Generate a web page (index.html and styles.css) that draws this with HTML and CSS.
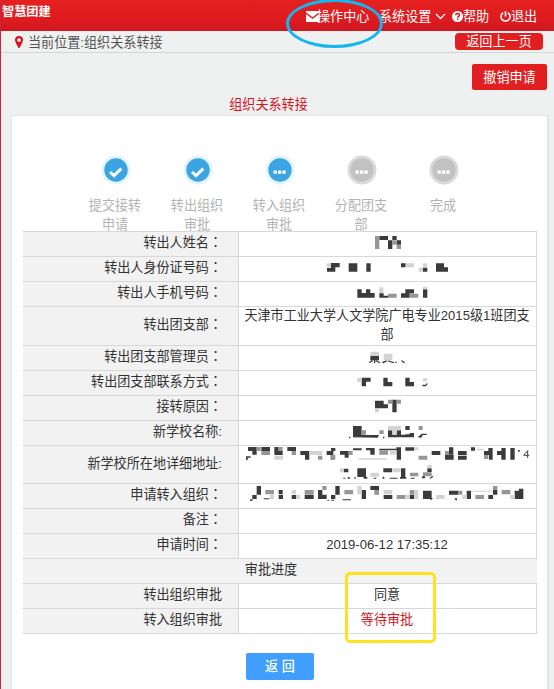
FILE: index.html
```html
<!DOCTYPE html>
<html lang="zh-CN">
<head>
<meta charset="utf-8">
<title>智慧团建</title>
<link rel="stylesheet" href="styles.css">
</head>
<body>
<div class="page">
  <header class="topbar">
    <div class="brand">智慧团建</div>
    <nav class="nav">
      <a class="nav-center"><svg width="13" height="11" viewBox="0 0 13 11"><path fill="#fff" d="M0 0h13v1.3L6.5 6.2 0 1.3zM0 3l6.5 5L13 3v8H0z"/></svg>操作中心</a>
      <a class="nav-settings">系统设置<svg class="chevron" width="11" height="7" viewBox="0 0 11 7"><path fill="none" stroke="#fff" stroke-width="1.3" d="M1 1l4.5 4.5L10 1"/></svg></a>
      <a class="nav-help"><svg width="11" height="11" viewBox="0 0 11 11"><circle cx="5.5" cy="5.5" r="5.5" fill="#fff"/><path d="M3.7 4.3c0-2.4 3.8-2.4 3.8-.1 0 1.3-1.8 1.2-1.8 2.5M5.7 7.6v1.5" fill="none" stroke="#d71920" stroke-width="1.5"/></svg>帮助</a>
      <a class="nav-exit"><svg width="11" height="11" viewBox="0 0 11 11"><path d="M3.2 1.7a4.5 4.5 0 1 0 4.6 0M5.5 0v5.4" fill="none" stroke="#fff" stroke-width="1.6"/></svg>退出</a>
    </nav>
  </header>
  <div class="crumbs">
    <svg class="pin" width="8" height="12" viewBox="0 0 8 12"><path fill="#d5141d" fill-rule="evenodd" d="M4 0a4 4 0 0 1 4 4C8 6 6.3 8.3 4.8 11.5Q4 12.5 3.2 11.5C1.700 8.300 0 6 0 4a4 4 0 0 1 4-4zm0 2.200a1.900 1.900 0 1 0 0 3.800 1.900 1.900 0 0 0 0-3.800z"/></svg>
    <span class="crumb-text">当前位置:组织关系转接</span>
    <a class="back-page">返回上一页</a>
  </div>
  <div class="actions"><a class="revoke">撤销申请</a></div>
  <h1 class="title">组织关系转接</h1>
  <main class="panel">
    <div class="steps">
      <div class="step"><svg class="dot" viewBox="0 0 30 30"><circle cx="15" cy="15" r="14.500" fill="#e2f5fe"/><circle cx="15" cy="15" r="11.700" fill="#3ba4e3"/><path d="M9 17l4 3.700 7.300-7" fill="none" stroke="#fff" stroke-width="3"/></svg><p>提交接转申请</p></div>
      <div class="step"><svg class="dot" viewBox="0 0 30 30"><circle cx="15" cy="15" r="14.500" fill="#e2f5fe"/><circle cx="15" cy="15" r="11.700" fill="#3ba4e3"/><path d="M9 17l4 3.700 7.300-7" fill="none" stroke="#fff" stroke-width="3"/></svg><p>转出组织审批</p></div>
      <div class="step"><svg class="dot" viewBox="0 0 30 30"><circle cx="15" cy="15" r="14.500" fill="#e2f5fe"/><circle cx="15" cy="15" r="11.700" fill="#3ba4e3"/><path d="M8.500 15.500h3.300v3.300H8.500zm4.500 0h3.300v3.300H13zm4.400 0h3.300v3.300h-3.300z" fill="#fff"/></svg><p>转入组织审批</p></div>
      <div class="step"><svg class="dot" viewBox="0 0 30 30"><circle cx="15" cy="15" r="14.500" fill="#d9dadb"/><circle cx="15" cy="15" r="11.700" fill="#c2c2c2"/><path d="M8.500 15.500h3.300v3.300H8.500zm4.500 0h3.300v3.300H13zm4.400 0h3.300v3.300h-3.300z" fill="#fff"/></svg><p>分配团支部</p></div>
      <div class="step"><svg class="dot" viewBox="0 0 30 30"><circle cx="15" cy="15" r="14.500" fill="#d9dadb"/><circle cx="15" cy="15" r="11.700" fill="#c2c2c2"/><path d="M8.500 15.500h3.300v3.300H8.500zm4.500 0h3.300v3.300H13zm4.400 0h3.300v3.300h-3.300z" fill="#fff"/></svg><p>完成</p></div>
    </div>
    <div class="table">
      <div class="label">转出人姓名<i lang="zh-TW">：</i></div>
      <div class="value"><svg class="mosaic" viewBox="27 15 894 72"><path class="m1" d="M448 27h26v12h-26zM474 40h13v26h-13zM487 27h13v12h-13zM500 40h13v13h-13z"/><path class="m2" d="M435 27h13v39h-13zM487 40h13v13h-13zM500 53h13v13h-13z"/></svg></div>
      <div class="label">转出人身份证号码<i lang="zh-TW">：</i></div>
      <div class="value"><svg class="mosaic" viewBox="27 87 894 75"><path class="m1" d="M303 105h26v13h-13v13h-25v-11h12zM356 106h26v25h-26zM409 106h13v25h-13zM513 106h14v12h-14zM618 106h24v12h12v13h-36zM579 119h13v12h-13z"/><path class="m3" d="M291 106h12v12h-12zM527 106h25v12h-25zM566 119h13v12h-13zM579 106h13v12h-13z"/></svg></div>
      <div class="label">转出人手机号码<i lang="zh-TW">：</i></div>
      <div class="value"><svg class="mosaic" viewBox="27 162 894 75"><path class="m1" d="M382 184h13v11h13v-11h13v11h13v14h-52zM448 196h13v7h13v6h-26zM513 196h13v-12h26v12h-13v13h-26zM579 184h13v25h-13z"/><path class="m2" d="M474 197h26v12h-26zM539 196h13v13h-13zM552 197h13v12h-13z"/><path class="m3" d="M448 178h12v17h-12zM579 176h13v8h-13z"/></svg></div>
      <div class="label tall">转出团支部<i lang="zh-TW">：</i></div>
      <div class="value tall">天津市工业大学人文学院广电专业2015级1班团支部</div>
      <div class="label">转出团支部管理员<i lang="zh-TW">：</i></div>
      <div class="value"><svg class="mosaic" viewBox="27 15 894 75"><path class="m1" d="M421 44h26v14h-26zM416 64l9-6 5 2-11 6zM432 58h4v8h-4zM439 58l12 6-2 3-12-6zM455 64l14-6 3 3-12 6zM474 58l19 6-3 3-17-6zM495 62h5v3h-5zM515 57l10 7-3 3-8-6z"/><path class="m3" d="M421 32h26v12h-26zM461 38h26v20h-26z"/></svg></div>
      <div class="label">转出团支部联系方式<i lang="zh-TW">：</i></div>
      <div class="value"><svg class="mosaic" viewBox="27 90 894 75"><path class="m1" d="M395 110h27v12h-14v14h-13zM460 110h13v13h14v13h-27zM526 110h13v13h13v13h-26zM577 131h10l4-6 2 5-6 6h-10z"/><path class="m3" d="M382 110h13v13h-13zM579 112h12v9h-12z"/></svg></div>
      <div class="label">接转原因<i lang="zh-TW">：</i></div>
      <div class="value"><svg class="mosaic" viewBox="27 165 894 75"><path class="m1" d="M435 179h26v11h13v12h-39zM487 176h13v38h-13z"/><path class="m2" d="M474 176h13v12h-13zM500 176h13v12h-13z"/><path class="m3" d="M435 204h12v10h-12z"/></svg></div>
      <div class="label">新学校名称:</div>
      <div class="value"><svg class="mosaic" viewBox="27 240 894 78"><path class="m1" d="M369 255h26v27h52l-4 8-74-1zM357 287h4v5h-4zM459 287h4v5h-4zM474 268h13v13h13v-13h13v13h14v8h-53zM526 255h13v12h-13zM526 280h13v-4h13v13h-26zM563 289l12-11h15v4h-12l-4 8z"/><path class="m2" d="M395 268h13v13h-13zM448 268h13v11h-13zM566 255h12v12h-12z"/><path class="m3" d="M474 255h39v13h-39zM487 268h13v13h-13z"/></svg></div>
      <div class="label address">新学校所在地详细地址:</div>
      <div class="value address"><svg class="mosaic" viewBox="27 33 894 114"><path class="m1" d="M54 36h26v23H67V48H54zM94 36h26v12H94zM133 36h13v12h12v12h-25zM172 36h26v12h-26zM211 48h27v26h-13V60h-14zM290 48h13v-9h13v9h-6v26h-8V60h-12zM330 48h26v20h-12v-9h-14zM369 40h26v6h-26zM408 39h26v20h-13V46h-13zM448 41h51v-4h14v37h-13V46h-52zM526 37h26v10h-26zM605 48h26v12h-26zM657 37h13v22h-13zM645 60h26v14h-26zM684 48h26v12h-26zM684 62h26v12h-26zM723 37h12v10h-12zM762 48h13v-9h13v35h-11V60h-15zM801 48h13v-9h13v35h-13V60h-13zM841 39h13v35h-13zM864 45h5v5h-5zM48 64h14v4h-9v7h-5zM342 101h13v11h-13zM382 100h26v26h-26zM460 100h26v12h-26zM513 100h13v26h-13zM592 100h13v11h-13zM340 128h6v3h-6zM353 127h7v4h-7zM373 126h4v5h-4zM401 126h11v5h-11zM431 128h8v3h-8zM458 125h5v6h-5zM479 128h24v3h-24zM510 126h19v5h-19zM542 128h12v3h-12zM576 125l7-5 3 10h-10zM594 124l5 5 8-7 3 4-10 5z"/><path d="M893 69V47l-12 14h17" fill="none" stroke="#444" stroke-width="3"/><path class="m2" d="M80 36h12v12H80zM94 48h26v12H94zM146 36h12v12h-12zM185 48h13v12h-13zM264 62h13v12h-13zM303 60h13v14h-13zM356 48h12v12h-12zM448 46h26v13h-26zM566 62h26v12h-26zM645 48h12v12h-12zM762 60h13v12h-13zM540 113h25v11h-25zM579 112h26v12h-26z"/><path class="m3" d="M133 62h26v12h-26zM238 48h39v12h-39zM386 70h85v4h-85zM480 45h19v14h-19zM552 37h13v9h-13zM739 41h22v5h-22zM421 113h26v12h-26zM487 100h25v12h-25zM330 100h12v12h-12zM592 90h13v10h-13z"/></svg></div>
      <div class="label">申请转入组织<i lang="zh-TW">：</i></div>
      <div class="value"><svg class="mosaic" viewBox="27 147 894 75"><path class="m1" d="M80 153h13v26H80v13H67v-12h13zM146 165h12v13h-12zM146 180h13v12h-13zM185 180h13v12h-13zM224 180h27v12h-27zM264 165h13v14h13v13h-26zM316 153h13v26h-13v13h-13v-12h13zM395 165h13v27h-13zM421 153h26v25h-13v-13h-13zM461 180h26v12h-26zM539 180h13v12h-13zM579 167h26v25h-26zM657 167h27v12h-27zM710 167h13v25h-13zM775 180h14v12h-14zM789 165h13v14h-13zM867 161h13v31h-26v-25h13zM60 193h8v4h-8zM101 190h17v3h-17zM292 194h5v3h-5zM304 194h8v3h-8zM338 193h25v3h-25zM597 189h12l-6 7zM673 190h8v6h-4z"/><path class="m2" d="M106 165h26v13h-26zM224 165h27v14h-27zM277 153h13v12h-13zM343 165h26v13h-26zM434 165h13v14h-13zM500 180h26v12h-26zM539 165h13v14h-13zM684 167h13v12h-13zM736 180h26v12h-26zM815 165h26v13h-26zM789 153h13v12h-13z"/><path class="m3" d="M119 180h13v12h-13zM185 165h13v13h-13zM198 180h13v12h-13zM382 153h13v25h-13zM461 165h26v13h-26zM526 180h13v12h-13zM552 165h13v27h-13zM618 180h26v12h-26zM697 180h13v12h-13zM723 167h65v3h-65zM841 180h13v12h-13z"/></svg></div>
      <div class="label">备注<i lang="zh-TW">：</i></div>
      <div class="value"></div>
      <div class="label">申请时间<i lang="zh-TW">：</i></div>
      <div class="value">2019-06-12 17:35:12</div>
      <div class="section">审批进度</div>
      <div class="label">转出组织审批</div>
      <div class="value">同意</div>
      <div class="label">转入组织审批</div>
      <div class="value pending">等待审批</div>
    </div>
    <a class="return">返 回</a>
  </main>
  <div class="ring"></div>
  <div class="frame"></div>
</div>
</body>
</html>
```
FILE: styles.css
```css
* { box-sizing: border-box; }
body {
  margin: 0;
  background: #eff1f1;
  color: #333;
  font: 13.1px/18.5px "Liberation Sans", "Noto Sans CJK SC", sans-serif;
}
.page {
  position: relative;
  height: 689px;
  overflow: hidden;
  border-left: 1px solid #c8273a;
}
.topbar {
  display: flex;
  justify-content: space-between;
  height: 31px;
  margin-left: -1px;
  padding: 0 17px 0 2px;
  background: linear-gradient(#e4211f, #df1b20 60%, #cd1722);
  color: #fff;
}
.brand { font-size: 12.2px; font-weight: 700; line-height: 25px; }
.nav { display: flex; line-height: 33px; white-space: nowrap; }
.nav a { display: flex; align-items: center; height: 33px; }
.nav-center { width: 73px; }
.nav-center svg { margin-right: -2px; }
.nav-settings { width: 73px; }
.nav-help { width: 48px; }
.nav-exit { width: 37px; }
.nav svg { flex: none; }
.chevron { margin-left: 4px; }
.crumbs {
  display: flex;
  align-items: center;
  height: 22px;
  padding: 0 11px 0 14px;
  border-bottom: 1px solid #d3d6d6;
  color: #555;
}
.pin { margin: 1px 5px 0 0; }
.crumb-text { padding-top: 3px; }
.back-page {
  width: 88px;
  height: 17px;
  margin-left: auto;
  border-radius: 4px;
  background: #e21f20;
  color: #fff;
  line-height: 17px;
  text-align: center;
}
.actions { display: flex; justify-content: flex-end; padding: 11px 7px 0 0; }
.revoke {
  width: 75px;
  height: 26px;
  border-radius: 2px;
  background: #e21f20;
  color: #fff;
  line-height: 27px;
  text-align: center;
}
.title {
  margin: 5px 0 0;
  padding-right: 18px;
  color: #d5141d;
  font-size: 13.1px;
  font-weight: 400;
  line-height: 20px;
  text-align: center;
}
.panel {
  width: 538px;
  height: 580px;
  margin-left: 10px;
  padding: 39px 13px 0 11px;
  border: 1px solid #e4e6e6;
  border-right-width: 2px;
  background: #fff;
}
.steps { display: flex; height: 76px; padding-left: 52px; }
.step { width: 82px; text-align: center; }
.dot { display: block; width: 30px; height: 30px; margin: 0 auto; }
.step p { width: 54px; margin: 12px 0 0 13px; color: #b3b3b3; }
.table {
  display: grid;
  grid-template-columns: 216px 298px;
  width: 514px;
  border-top: 1px solid #d8d8d8;
  border-right: 1px solid #d8d8d8;
}
.label, .value, .section {
  height: 25px;
  border-bottom: 1px solid #d8d8d8;
  line-height: 21px;
  text-align: center;
}
.label {
  padding-right: 16px;
  border-right: 1px solid #d8d8d8;
  background: #f2f2f2;
  text-align: right;
}
.label i { font-family: "Noto Sans CJK TC", sans-serif; font-style: normal; line-height: 1; }
.value { padding-right: 2px; }
.section { grid-column: 1 / 3; padding-right: 18px; background: #f2f2f2; }
.label.tall { height: 38.5px; line-height: 35px; }
.value.tall { height: 38.5px; padding: 0 5px 0 3px; line-height: 18.5px; }
.label.address { height: 38.5px; line-height: 35px; }
.value.address { height: 38.5px; }
.pending { color: #d5141d; }
.mosaic { display: block; width: 298px; height: auto; overflow: visible; }
.m1 { fill: #3b3b3b; }
.m2 { fill: #969696; }
.m3 { fill: #d3d3d3; }
.return {
  display: block;
  width: 68px;
  height: 27px;
  margin: 19px 0 0 223px;
  border-radius: 2px;
  background: #409eff;
  color: #fff;
  font-weight: 500;
  line-height: 27px;
  text-align: center;
}
.ring {
  position: absolute;
  top: -1px;
  left: 285px;
  width: 97px;
  height: 49px;
  border: 3px solid #16b5f0;
  border-radius: 50%;
}
.frame {
  position: absolute;
  top: 572px;
  left: 344px;
  width: 91px;
  height: 71px;
  border: 3px solid #fbe41d;
  border-radius: 5px;
}
```
